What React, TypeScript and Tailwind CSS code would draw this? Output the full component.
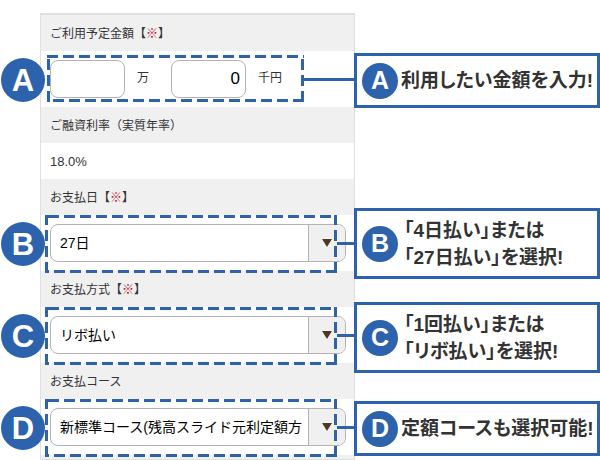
import React from "react";

type Mark = "A" | "B" | "C" | "D";

interface AnnotationProps {
  mark: Mark;
  narrow?: boolean;
}

// Dashed frame, round badge and connector laid over a form row
function Annotation({ mark, narrow = false }: AnnotationProps) {
  return (
    <div className="pointer-events-none absolute inset-0">
      <div
        className={`absolute ${
          narrow ? "top-1 bottom-[5px] left-1.5 right-[50px]" : "top-0 -bottom-0.5 left-1 right-[17px]"
        }`}
      >
        <svg className="h-full w-full overflow-hidden" stroke="#2d62ac" strokeWidth="6" strokeDasharray="11 5">
          <line x1="100%" y1="0" x2="0" y2="0" strokeDashoffset="10" />
          <line x1="100%" y1="100%" x2="100%" y2="0" />
          <line x1="100%" y1="100%" x2="0" y2="100%" />
          <line x1="0" y1="100%" x2="0" y2="0" />
        </svg>
      </div>
      <div className={`absolute -right-px top-[27px] h-[3px] bg-[#2d62ac] ${narrow ? "w-[54px]" : "w-[18px]"}`} />
      <div className="absolute -left-10 top-[7px] flex h-11 w-11 items-center justify-center rounded-full bg-[#2d62ac] text-[31px] font-bold leading-none text-white">
        {mark}
      </div>
    </div>
  );
}

function RowLabel({ htmlFor, required, children }: { htmlFor?: string; required?: boolean; children: React.ReactNode }) {
  return (
    <div className="bg-[#f0f0f0] px-[9px] pt-[9px] pb-[7px] text-xs leading-5 text-[#333]">
      <label htmlFor={htmlFor}>
        {children}
        {required && (
          <>
            【<span className="text-[#b5122e]">※</span>】
          </>
        )}
      </label>
    </div>
  );
}

function SelectRow({ id, mark, value }: { id: string; mark: Mark; value: string }) {
  return (
    <div className="relative py-[9px] pl-[9px] pr-2">
      <div className="relative">
        <select
          id={id}
          className="block h-[38px] w-full appearance-none rounded-lg border border-[#b3b3b3] bg-white pl-[9px] pr-9 text-sm text-black"
        >
          <option>{value}</option>
        </select>
        <span className="pointer-events-none absolute inset-y-px right-px flex w-[37px] items-center justify-center rounded-r-[7px] border-l border-[#b3b3b3] bg-[#f0f0f0]">
          <svg width="14" height="12" viewBox="0 0 14 12">
            <path d="M2 2h10L7 10z" fill="#4b3a22" stroke="#fff" strokeWidth="1" paintOrder="stroke" />
          </svg>
        </span>
      </div>
      <Annotation mark={mark} />
    </div>
  );
}

interface CalloutProps {
  mark: Mark;
  lines: string[];
  className: string;
}

function Callout({ mark, lines, className }: CalloutProps) {
  return (
    <div className={`flex items-center border-[3px] border-[#2d62ac] bg-white pl-[5px] ${className}`}>
      <span className="flex h-9 w-9 shrink-0 items-center justify-center rounded-full bg-[#2d62ac] text-[25px] font-bold leading-none text-white">
        {mark}
      </span>
      <p
        className={`whitespace-nowrap text-[19px] font-bold leading-[27px] text-[#333] [font-feature-settings:'palt'] ${
          lines.length > 1 ? "pl-1.5" : "pl-[3px]"
        }`}
      >
        {lines.map(line => (
          <span key={line} className="block">
            {line}
          </span>
        ))}
      </p>
    </div>
  );
}

const amountInput =
  "h-[38px] w-[75px] rounded-lg border border-[#b3b3b3] bg-white px-[5px] text-right text-[17px] text-black";

export default function App() {
  return (
    <main className="grid grid-cols-[minmax(0,9fr)_minmax(0,7fr)] items-start bg-white pl-10 font-['Liberation_Sans','Noto_Sans_CJK_JP',sans-serif]">
      <form className="mt-[13px] border border-t-2 border-[#e0e0e0] bg-white">
        <RowLabel htmlFor="amount-man" required>
          ご利用予定金額
        </RowLabel>
        <div className="relative flex items-center py-[9px] pl-[9px] text-xs text-[#333]">
          <input id="amount-man" type="text" className={amountInput} />
          <label htmlFor="amount-man" className="pl-3 pb-0.5">
            万
          </label>
          <input id="amount-sen" type="text" defaultValue="0" className={`ml-[22px] ${amountInput}`} />
          <label htmlFor="amount-sen" className="pl-3 pb-0.5">
            千円
          </label>
          <Annotation mark="A" narrow />
        </div>

        <RowLabel>ご融資利率（実質年率）</RowLabel>
        <p className="px-[9px] pt-[9px] pb-[7px] text-[13px] leading-5 text-[#333]">18.0%</p>

        <RowLabel htmlFor="pay-day" required>
          お支払日
        </RowLabel>
        <SelectRow id="pay-day" mark="B" value="27日" />

        <RowLabel htmlFor="pay-method" required>
          お支払方式
        </RowLabel>
        <SelectRow id="pay-method" mark="C" value="リボ払い" />

        <RowLabel htmlFor="pay-course">お支払コース</RowLabel>
        <SelectRow id="pay-course" mark="D" value="新標準コース(残高スライド元利定額方" />
        <div className="h-1 bg-[#f0f0f0]" />
      </form>

      {/* Callouts */}
      <aside className="relative -ml-px">
        <Callout mark="A" lines={["利用したい金額を入力!"]} className="mt-[53px] min-h-[55px]" />
        <Callout mark="B" lines={["「4日払い」または", "「27日払い」を選択!"]} className="mt-[100px] min-h-[71px]" />
        <Callout mark="C" lines={["「1回払い」または", "「リボ払い」を選択!"]} className="mt-[23px] min-h-[71px]" />
        <Callout mark="D" lines={["定額コースも選択可能!"]} className="mt-7 min-h-[55px]" />
      </aside>
    </main>
  );
}
